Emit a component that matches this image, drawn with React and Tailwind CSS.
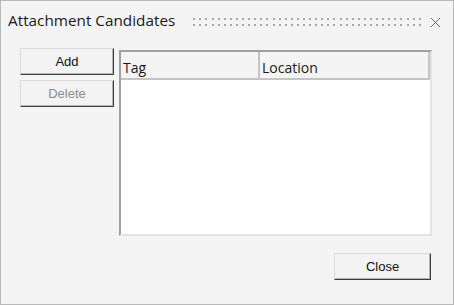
import { X } from "lucide-react";

function DialogButton({ label, disabled }) {
    return (
        <button
            type="button"
            disabled={disabled}
            className={`h-[27px] bg-[#f3f3f3] border border-t-[#dcdcdc] border-l-[#dcdcdc] border-r-[#3c3c3c] border-b-[#3c3c3c] shadow-[inset_-1px_-1px_0_#b4b4b4] text-[13px] font-['Liberation_Sans',sans-serif] ${
                disabled ? "text-[#8c8c8c]" : "text-[#111]"
            }`}
        >
            {label}
        </button>
    );
}

function App() {
    const dots = Array.from({ length: 38 });

    return (
        <div className="w-[454px] h-[305px] border border-[#b9b9b9] bg-[#f4f4f4] flex flex-col font-['Open_Sans',sans-serif]">
            {/* title bar */}
            <div className="h-[39px] flex items-center pl-[7px] pr-[9px]">
                <span className="text-[15.3px] text-[#1a1a1a] whitespace-nowrap">Attachment Candidates</span>
                <div className="flex-1 ml-[18px] mr-[6px] mt-[3px] grid grid-rows-2 gap-y-[4px]">
                    {[0, 1].map((row) => (
                        <div key={row} className="flex justify-between">
                            {dots.map((_, i) => (
                                <span key={i} className="w-[2px] h-[2px] bg-[#a8a8a8]" />
                            ))}
                        </div>
                    ))}
                </div>
                <X size={17} strokeWidth={1.4} className="text-[#666] mt-[4px]" />
            </div>

            {/* content */}
            <div className="flex pl-[19px] mt-[8px] gap-[5px]">
                <div className="w-[94px] flex flex-col gap-[5px]">
                    <DialogButton label="Add" />
                    <DialogButton label="Delete" disabled />
                </div>

                <div className="mt-[2px] w-[313px] h-[186px] border-2 border-t-[#a0a0a0] border-l-[#a0a0a0] border-r-[#e2e2e2] border-b-[#e2e2e2] bg-white">
                    <div className="flex h-[28px] bg-[#f4f4f4] border-b-2 border-[#c4c4c4] text-[14px] text-[#1a1a1a] w-[309px] border-r-2 border-r-[#c4c4c4]">
                        <div className="w-[139px] pl-[2px] pt-[5px] border-r-2 border-[#c4c4c4]">Tag</div>
                        <div className="flex-1 pl-[2px] pt-[5px]">Location</div>
                    </div>
                </div>
            </div>

            {/* footer */}
            <div className="flex justify-end mt-[17px] pr-[22px]">
                <div className="w-[97px] flex flex-col">
                    <DialogButton label="Close" />
                </div>
            </div>
        </div>
    );
}

export default App;
